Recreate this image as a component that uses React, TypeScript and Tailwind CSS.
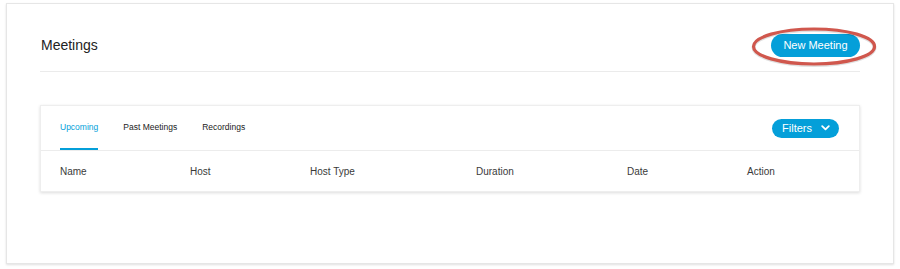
const columns = ['Name', 'Host', 'Host Type', 'Duration', 'Date', 'Action']

const tabs = [
  { label: 'Upcoming', active: true },
  { label: 'Past Meetings', active: false },
  { label: 'Recordings', active: false },
]

export default function App() {
  return (
    <div className="w-[900px] h-[269px] bg-white pt-[3px] px-[6px] pb-[5px] font-['Liberation_Sans',Arial,sans-serif] text-[#2b2b2b]">
      <div className="h-[261px] border border-[#e6e6e6] bg-white shadow-[0_1px_2px_rgba(0,0,0,0.12)] px-[33px]">
        {/* Header */}
        <div className="relative flex items-center justify-between pt-[30px] pb-[14px] border-b border-[#ebebeb]">
          <h1 className="text-[14px] leading-[23px] text-[#222] pl-px">Meetings</h1>
          <button className="h-[23px] w-[89px] rounded-full bg-[#049fd9] text-white text-[11px] leading-[23px]">
            New Meeting
          </button>
          {/* annotation ring */}
          <svg
            className="absolute right-[-17px] top-[23px] pointer-events-none"
            width="126"
            height="40"
            viewBox="0 0 126 40"
          >
            <ellipse cx="63" cy="20.5" rx="60.5" ry="17.5" fill="none" stroke="rgba(0,0,0,0.12)" strokeWidth="4" />
            <ellipse cx="63" cy="19.5" rx="60.5" ry="17.5" fill="none" stroke="#d0574d" strokeWidth="3.2" />
          </svg>
        </div>

        {/* Meetings table card */}
        <div className="mt-[33px] border border-[#eeeeee] bg-white shadow-[0_1px_3px_rgba(0,0,0,0.14)]">
          <div className="flex items-center justify-between h-[45px] pl-[19px] pr-[20px] border-b border-[#ececec]">
            <div className="flex h-full gap-[25px]">
              {tabs.map((tab) => (
                <div
                  key={tab.label}
                  className={
                    tab.active
                      ? 'flex items-center h-full text-[8.5px] text-[#049fd9] border-b-2 border-[#049fd9]'
                      : 'flex items-center h-full text-[8.5px] text-[#222] pb-[2px]'
                  }
                >
                  {tab.label}
                </div>
              ))}
            </div>
            <button className="flex items-center gap-[9px] h-[19px] rounded-full bg-[#049fd9] pl-[10px] pr-[9px] text-white text-[11px]">
              Filters
              <svg width="9" height="6" viewBox="0 0 9 6" fill="none">
                <path d="M1.2 1.2 L4.5 4.4 L7.8 1.2" stroke="white" strokeWidth="1.8" strokeLinecap="round" strokeLinejoin="round" />
              </svg>
            </button>
          </div>
          <div className="grid grid-cols-[130px_120px_166px_151px_120px_1fr] items-center h-[40px] pl-[19px] text-[10px] text-[#3a3a3a]">
            {columns.map((col) => (
              <div key={col}>{col}</div>
            ))}
          </div>
        </div>
      </div>
    </div>
  )
}
